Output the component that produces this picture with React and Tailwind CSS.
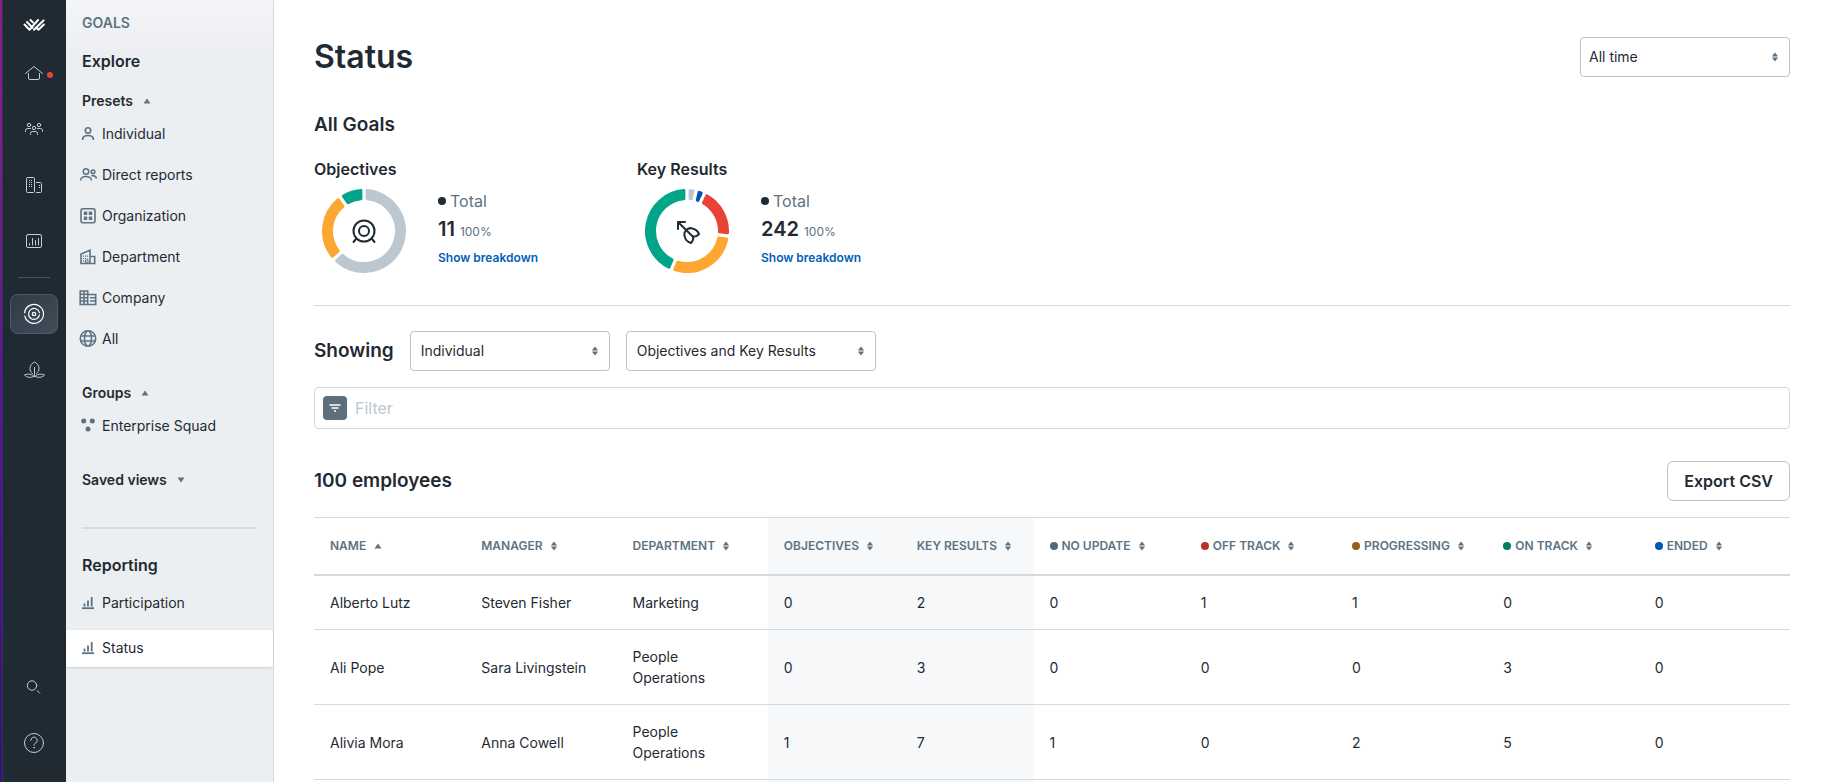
import React, { useState } from 'react';

const RailIcon = ({ children, size = 24 }) => (
  <svg width={size} height={size} viewBox="0 0 24 24" fill="none" stroke="currentColor" strokeWidth="1" strokeLinecap="round" strokeLinejoin="round" aria-hidden="true">
    {children}
  </svg>
);

const HomeIcon = () => (
  <RailIcon>
    <path d="M3.5 12.5 12 5.5l8.5 7" />
    <path d="M6.5 12.5v4.5a1.5 1.5 0 0 0 1.5 1.5h8a1.5 1.5 0 0 0 1.5-1.5v-4.5" />
  </RailIcon>
);

const PeopleIcon = () => (
  <RailIcon>
    <circle cx="7" cy="8" r="1.7" />
    <circle cx="17" cy="8" r="1.7" />
    <circle cx="12" cy="11" r="1.7" />
    <path d="M3.5 14.5v-1a2 2 0 0 1 2-2h3M20.5 14.5v-1a2 2 0 0 0-2-2h-3" />
    <path d="M8.5 17.5v-1a2 2 0 0 1 2-2h3a2 2 0 0 1 2 2v1" />
  </RailIcon>
);

const OfficeIcon = () => (
  <RailIcon>
    <rect x="4.5" y="4.5" width="8" height="15" rx="1" />
    <path d="M14.5 9.5h4a1 1 0 0 1 1 1v8a1 1 0 0 1-1 1h-4" />
    <path d="M7.5 7v7M9.5 7v7M17.5 12v3" strokeDasharray="1 1" strokeLinecap="butt" />
  </RailIcon>
);

const AnalyticsIcon = () => (
  <RailIcon>
    <rect x="4.5" y="5.5" width="15" height="13" rx="1.5" />
    <path d="M7.5 14.5v1.5M10.5 9.5v6.5M13.5 11.5v4.5M16.5 9.5v6.5" />
  </RailIcon>
);

const TargetIcon = () => (
  <RailIcon>
    <path d="M2.6 10.6a9.5 9.5 0 1 1 .2 3.6" strokeWidth="1.2" />
    <path d="M17.4 13.2a5.5 5.5 0 1 1 0-2.6" strokeWidth="1.2" />
    <circle cx="12" cy="12" r="1.7" strokeWidth="1.2" />
  </RailIcon>
);

const PlantIcon = () => (
  <RailIcon>
    <path d="M12.5 17.5V9.5" />
    <path d="M10.5 15.5c-1.5-1.2-2.5-2.8-2.5-5 0-3 2-5.5 4.5-6.500 2.500 1 4.500 3.500 4.500 6.500 0 2.200-1 3.800-2.500 5" />
    <path d="M12 18.300c-2-2.300-6-2.800-9.500-1.300 2 2.500 6.500 3.200 9.500 1.300ZM13 18.300c2-2.300 6-2.800 9.500-1.300-2 2.500-6.500 3.200-9.500 1.300Z" />
  </RailIcon>
);

const SearchIcon = () => (
  <RailIcon>
    <circle cx="10" cy="10.500" r="4.700" />
    <path d="m15.200 15.700 2.500 2.500" />
  </RailIcon>
);

const HelpIcon = () => (
  <RailIcon>
    <circle cx="12" cy="12" r="9.500" />
    <path d="M8.800 9.300a3.200 3.200 0 1 1 4.900 2.700c-1 .6-1.700 1.200-1.700 2.300" />
    <circle cx="12" cy="16.700" r=".3" />
  </RailIcon>
);

const Logo = () => (
  <svg width="22" height="14" viewBox="0 0 22 14" fill="none" stroke="#fff" strokeWidth="2" strokeLinecap="round" aria-hidden="true">
    <path d="M1.500 6.500 6.500 11.800M4 4 9.500 9.800M7.500 2 10 4.500M11 11.800 20.500 2.500M6.500 11.800 15 2M15.500 11.800 20.800 6.500M15.500 11.800 13 9.500" />
  </svg>
);

const SideIcon = ({ children }) => (
  <svg className="shrink-0 text-[#5d7383]" width="20" height="20" viewBox="0 0 20 20" fill="none" stroke="currentColor" strokeWidth="1.600" aria-hidden="true">
    {children}
  </svg>
);

const IndividualIcon = () => (
  <SideIcon>
    <circle cx="10" cy="6.500" r="2.700" />
    <path d="M4.700 16v-.8c0-2.200 2.300-3.700 5.300-3.700s5.300 1.500 5.300 3.700v.8" />
  </SideIcon>
);

const ReportsIcon = () => (
  <SideIcon>
    <circle cx="8" cy="6.500" r="2.700" />
    <path d="M2.700 15.500v-.5c0-2 2.300-3.500 5.300-3.500s5.300 1.500 5.300 3.500v.5" />
    <circle cx="15" cy="6.800" r="1.800" />
    <path d="M13.500 10.700c2.500-.4 4.500.7 5 2.800" />
  </SideIcon>
);

const OrganizationIcon = () => (
  <SideIcon>
    <rect x="3" y="2.700" width="14" height="14" rx="2" />
    <path d="M5.800 5.500h3.400v3.400H5.800zM10.800 5.500h3.400v3.400h-3.400zM5.800 10.500h3.400v3.400H5.800zM10.800 10.500h3.400v3.400h-3.400z" fill="currentColor" stroke="none" />
  </SideIcon>
);

const DepartmentIcon = () => (
  <SideIcon>
    <path d="M3 16.500V7l9-3.700v13.200ZM12 9.500h4.700v7H12M2.500 16.500h15" />
    <path d="M5.500 8.500v6M7.500 8.500v6M9.500 8.500v3" strokeWidth="1.200" strokeDasharray="1.200 1.200" />
    <path d="M7.500 13h2.500v3H7.500z" strokeWidth="1" />
  </SideIcon>
);

const CompanyIcon = () => (
  <SideIcon>
    <path d="M2.200 3h7.500v13.500H2.200zM6 3v13.500M2.200 6.300h7.500M2.200 9.700h7.500M2.200 13h7.500" />
    <path d="M9.700 6.500h8v10h-8M12 9.700h5.500M12 13h5.500" />
  </SideIcon>
);

const GlobeIcon = () => (
  <SideIcon>
    <circle cx="10" cy="9.500" r="7.700" />
    <ellipse cx="10" cy="9.500" rx="3.500" ry="7.700" />
    <path d="M2.800 7h14.400M2.800 12h14.400" />
  </SideIcon>
);

const GroupIcon = () => (
  <SideIcon>
    <g fill="currentColor" stroke="none">
      <circle cx="5.700" cy="5" r="2.500" />
      <circle cx="14.300" cy="5" r="2.500" />
      <circle cx="10" cy="13" r="2.500" />
    </g>
  </SideIcon>
);

const ReportIcon = () => (
  <SideIcon>
    <path d="M4 15.200h12" strokeWidth="1.800" />
    <path d="M6.500 10.500v3M10 7.500v6M13.700 4v9.500" strokeWidth="1.800" />
  </SideIcon>
);

const ObjectiveIcon = () => (
  <svg x="30" y="29" width="24" height="26" viewBox="0 0 24 26" fill="none" stroke="#1f2a33" strokeWidth="2" strokeLinecap="round">
    <circle cx="12" cy="13" r="10.500" />
    <circle cx="12" cy="13" r="5" />
    <path d="m4 21-2.500 3M20 21l2.500 3" />
  </svg>
);

const ArrowIcon = () => (
  <svg x="30" y="30" width="26" height="26" viewBox="0 0 26 26" fill="none" stroke="#1f2a33" strokeWidth="2" strokeLinecap="round" strokeLinejoin="round">
    <path d="M3 10V3h7M3 3l15 14.700" />
    <path d="M11 11.500c1.500-2 4-2.800 6.500-2 3 .8 5.500 3 6.500 5.700-1.500 1.500-3.500 2.500-5.800 2.500" />
    <path d="M11 11.500c-1.500 1.500-2 4-1.200 6.500.9 2.900 3.200 5.200 6.200 6 1.500-1.500 2.500-3.800 2.200-6.300" />
  </svg>
);

const SortIcon = () => (
  <svg width="6" height="10" viewBox="0 0 6 10" fill="#5d7383" aria-hidden="true">
    <path d="M3 .5 5.800 4v.5H.2V4zM3 9.500.2 6v-.5h5.600V6z" />
  </svg>
);

const Caret = ({ down }) => (
  <svg width="8" height="6" viewBox="0 0 8 6" fill="#5d7383" aria-hidden="true">
    <path d={down ? 'M.5 .5h7L4 5.500z' : 'M4 .5 7.500 5.500h-7z'} />
  </svg>
);

// Ring segment from a to b (degrees, clockwise from the top) with parallel gaps
const segmentPath = (a, b) => {
  const outer = 40.5;
  const inner = 32.5;
  const point = (r, angle) => `${42 + r * Math.sin(angle)} ${42 - r * Math.cos(angle)}`;
  const rad = (deg) => (deg * Math.PI) / 180;
  const inset = (r) => Math.asin(3.1 / r);
  const large = b - a > 190 ? 1 : 0;
  return [
    `M${point(outer, rad(a) + inset(outer))}`,
    `A${outer} ${outer} 0 ${large} 1 ${point(outer, rad(b) - inset(outer))}`,
    `L${point(inner, rad(b) - inset(inner))}`,
    `A${inner} ${inner} 0 ${large} 0 ${point(inner, rad(a) + inset(inner))}Z`,
  ].join('');
};

const Donut = ({ segments, children }) => (
  <svg width="84" height="84" viewBox="0 0 84 84" aria-hidden="true">
    {segments.map(([from, to, color]) => (
      <path key={from} d={segmentPath(from, to)} fill={color} stroke={color} strokeWidth="3" strokeLinejoin="round" />
    ))}
    {children}
  </svg>
);

const GoalSummary = ({ title, total, segments, icon }) => (
  <div className="w-[323px]">
    <h3 className="text-base font-semibold">{title}</h3>
    <div className="mt-2 flex gap-8 pl-2">
      <Donut segments={segments}>{icon}</Donut>
      <div className="flex flex-col">
        <div className="flex items-center gap-1 text-base leading-6 text-[#5d7383]">
          <span className="h-2 w-2 rounded-full bg-[#1f2a33]" />
          Total
        </div>
        <div className="mt-1 flex items-baseline gap-[5px]">
          <span className="text-xl leading-6 font-semibold">{total}</span>
          <span className="text-xs leading-6 text-[#5d7383]">100%</span>
        </div>
        <a href="#breakdown" className="mt-[2px] text-xs leading-6 font-semibold text-[#0061b8]">Show breakdown</a>
      </div>
    </div>
  </div>
);

const Select = ({ label, options, className, padding = 'pl-2' }) => (
  <div className={`relative ${className}`}>
    <select
      aria-label={label}
      className={`h-10 w-full appearance-none rounded border border-[#b6c3cd] bg-white pr-8 text-sm text-[#1f2a33] ${padding}`}
    >
      {options.map((option) => (
        <option key={option}>{option}</option>
      ))}
    </select>
    <span className="pointer-events-none absolute inset-y-0 right-3 flex items-center">
      <SortIcon />
    </span>
  </div>
);

const mainNav = [
  { label: 'Home', icon: HomeIcon, dot: true },
  { label: 'People', icon: PeopleIcon },
  { label: 'Company', icon: OfficeIcon },
  { label: 'Analytics', icon: AnalyticsIcon },
];

const presets = [
  { label: 'Individual', icon: IndividualIcon },
  { label: 'Direct reports', icon: ReportsIcon },
  { label: 'Organization', icon: OrganizationIcon },
  { label: 'Department', icon: DepartmentIcon },
  { label: 'Company', icon: CompanyIcon },
  { label: 'All', icon: GlobeIcon },
];

const objectiveSegments = [
  [0, 227, '#bcc7d0'],
  [227, 325, '#fda732'],
  [325, 360, '#00a58a'],
];

const keyResultSegments = [
  [0, 13, '#bcc7d0'],
  [13, 25, '#0057b8'],
  [25, 97, '#e84336'],
  [97, 202, '#fda732'],
  [202, 360, '#00a58a'],
];

const columns = [
  { label: 'Name', sorted: true },
  { label: 'Manager' },
  { label: 'Department' },
  { label: 'Objectives', shaded: true },
  { label: 'Key results', shaded: true },
  { label: 'No update', dot: 'bg-[#556877]' },
  { label: 'Off track', dot: 'bg-[#b5322a]' },
  { label: 'Progressing', dot: 'bg-[#94601a]' },
  { label: 'On track', dot: 'bg-[#007a62]' },
  { label: 'Ended', dot: 'bg-[#0057b8]' },
];

const employees = [
  ['Alberto Lutz', 'Steven Fisher', 'Marketing', 0, 2, 0, 1, 1, 0, 0],
  ['Ali Pope', 'Sara Livingstein', 'People Operations', 0, 3, 0, 0, 0, 3, 0],
  ['Alivia Mora', 'Anna Cowell', 'People Operations', 1, 7, 1, 0, 2, 5, 0],
];

const RailLink = ({ label, children }) => (
  <a href={`#${label.toLowerCase()}`} aria-label={label} className="relative flex h-10 w-12 items-center justify-center text-[#c3ced6]">
    {children}
  </a>
);

const Rail = () => (
  <nav aria-label="Main" className="flex w-[66px] shrink-0 bg-[#1f2a33]">
    <div className="w-[2px] bg-linear-to-b from-[#93198a] via-[#5c1498] to-[#35107f]" />
    <div className="flex flex-1 flex-col items-center gap-4 border-l border-[#2c3945] pt-[18px] pr-px pb-[19px]">
      <a href="#top" aria-label="Lattice" className="mb-[5px]"><Logo /></a>
      {mainNav.map(({ label, icon: Icon, dot }) => (
        <RailLink key={label} label={label}>
          <Icon />
          {dot && <span className="absolute top-[19px] right-[5px] h-[6px] w-[6px] rounded-full bg-[#e84336]" />}
        </RailLink>
      ))}
      <div className="h-px w-8 shrink-0 bg-[#44525e]" />
      <a href="#goals" aria-label="Goals" className="flex h-10 w-12 items-center justify-center rounded-lg border border-[#4c5b67] bg-linear-to-br from-[#2f3c48] to-[#414e5a] text-white">
        <TargetIcon />
      </a>
      <RailLink label="Grow"><PlantIcon /></RailLink>
      <div className="mt-auto flex flex-col gap-4">
        <RailLink label="Search"><SearchIcon /></RailLink>
        <RailLink label="Help"><HelpIcon /></RailLink>
      </div>
    </div>
  </nav>
);

const GroupToggle = ({ children, open, onClick, className }) => (
  <button type="button" aria-expanded={open} onClick={onClick} className={`mx-4 flex items-center gap-[10px] text-sm leading-5 font-semibold ${className}`}>
    {children}
    <Caret down={!open} />
  </button>
);

const Sidebar = () => {
  const [presetsOpen, setPresetsOpen] = useState(true);
  const [groupsOpen, setGroupsOpen] = useState(true);
  const [viewsOpen, setViewsOpen] = useState(false);

  return (
    <aside className="w-[208px] shrink-0 border-r border-[#d3dbe1] bg-[#ebeff2]">
      <div className="h-[52px] bg-linear-to-b from-[#f4f5f8] to-[#eeeff4] px-4 pt-[13px] text-sm leading-5 font-semibold text-[#5d7383]">GOALS</div>
      <h2 className="-mt-[3px] px-4 text-base leading-6 font-semibold">Explore</h2>
      <GroupToggle open={presetsOpen} onClick={() => setPresetsOpen(!presetsOpen)} className="mt-[18px]">Presets</GroupToggle>
      {presetsOpen && (
        <ul className="mt-[2px]">
          {presets.map(({ label, icon: Icon }) => (
            <li key={label}>
              <a href={`#${label}`} className="flex h-[41px] items-center gap-1 pl-3 text-sm">
                <Icon />
                {label}
              </a>
            </li>
          ))}
        </ul>
      )}
      <GroupToggle open={groupsOpen} onClick={() => setGroupsOpen(!groupsOpen)} className="mt-6">Groups</GroupToggle>
      {groupsOpen && (
        <a href="#enterprise" className="mt-[2px] flex h-[41px] items-center gap-1 pl-3 text-sm">
          <GroupIcon />
          Enterprise Squad
        </a>
      )}
      <GroupToggle open={viewsOpen} onClick={() => setViewsOpen(!viewsOpen)} className="mt-6">Saved views</GroupToggle>
      <hr className="mx-4 mt-[37px] border-t-2 border-[#d3dbe1]" />
      <h2 className="mt-6 px-4 text-base leading-6 font-semibold">Reporting</h2>
      <a href="#participation" className="mt-2 flex h-9 items-center gap-1 pl-3 text-sm">
        <ReportIcon />
        Participation
      </a>
      <a href="#status" aria-current="page" className="mt-[9px] flex h-[37px] items-center gap-1 bg-white pb-px pl-3 text-sm shadow-sm">
        <ReportIcon />
        Status
      </a>
    </aside>
  );
};

const EmployeeTable = () => (
  <table className="mt-4 w-full table-fixed border-separate border-spacing-0 text-left text-sm">
    <thead>
      <tr>
        {columns.map(({ label, sorted, shaded, dot }) => (
          <th
            key={label}
            scope="col"
            className={`h-[59px] border-t border-b-2 border-[#d3dbe1] px-4 text-xs font-semibold text-[#5d7383] uppercase ${shaded ? 'w-[9%] bg-[#f6f8fa]' : ''}`}
          >
            <button type="button" className="flex items-center gap-2 whitespace-nowrap uppercase">
              <span className="flex items-center gap-1">
                {dot && <span className={`h-2 w-2 rounded-full ${dot}`} />}
                {label}
              </span>
              {sorted ? <Caret /> : <SortIcon />}
            </button>
          </th>
        ))}
      </tr>
    </thead>
    <tbody>
      {employees.map((row) => (
        <tr key={row[0]}>
          {row.map((value, i) => (
            <td key={columns[i].label} className={`border-b border-[#d3dbe1] px-4 py-4 leading-[21px] ${columns[i].shaded ? 'bg-[#f6f8fa]' : ''}`}>
              {value}
            </td>
          ))}
        </tr>
      ))}
      <tr>
        {columns.map(({ label, shaded }) => (
          <td key={label} className={`h-14 ${shaded ? 'bg-[#f6f8fa]' : ''}`} />
        ))}
      </tr>
    </tbody>
  </table>
);

const StatusPage = () => (
  <main className="min-w-0 flex-1 overflow-y-auto bg-white pt-[37px] pr-[37px] pl-10 [scrollbar-width:none]">
    <header className="flex items-center justify-between">
      <h1 className="text-[32px] leading-10 font-semibold">Status</h1>
      <Select label="Time period" options={['All time']} className="w-[210px]" />
    </header>

    <section className="border-b border-[#d3dbe1] pb-8">
      <h2 className="mt-[34px] text-[19px] leading-7 font-semibold">All Goals</h2>
      <div className="mt-[18px] flex">
        <GoalSummary title="Objectives" total="11" segments={objectiveSegments} icon={<ObjectiveIcon />} />
        <GoalSummary title="Key Results" total="242" segments={keyResultSegments} icon={<ArrowIcon />} />
      </div>
    </section>

    <div className="mt-[25px] flex items-center gap-4">
      <h2 className="text-[19px] leading-7 font-semibold">Showing</h2>
      <Select label="Showing" options={['Individual']} className="w-[200px]" padding="pl-[10px]" />
      <Select label="Goal type" options={['Objectives and Key Results']} className="w-[250px]" padding="pl-[10px]" />
    </div>

    <div className="mt-4 flex h-[42px] items-center gap-2 rounded border border-[#d3dbe1] px-2">
      <button type="button" aria-label="Filter options" className="flex h-6 w-6 items-center justify-center rounded bg-[#5d6e7c]">
        <svg width="12" height="8" viewBox="0 0 12 8" stroke="#fff" strokeWidth="1.500" aria-hidden="true">
          <path d="M.5 1h11M2.500 4h7M5 7h2" />
        </svg>
      </button>
      <input type="text" aria-label="Filter" placeholder="Filter" className="min-w-0 flex-1 text-base outline-none placeholder:text-[#bcc7d0]" />
    </div>

    <div className="mt-8 flex items-center justify-between">
      <h2 className="text-[19px] leading-7 font-semibold">100 employees</h2>
      <button type="button" className="h-10 rounded-md border border-[#b6c3cd] px-4 text-base font-semibold">Export CSV</button>
    </div>

    <EmployeeTable />
  </main>
);

const App = () => (
  <div className="flex h-screen overflow-hidden font-[Inter,sans-serif] text-[#1f2a33]">
    <Rail />
    <Sidebar />
    <StatusPage />
  </div>
);

export default App;
